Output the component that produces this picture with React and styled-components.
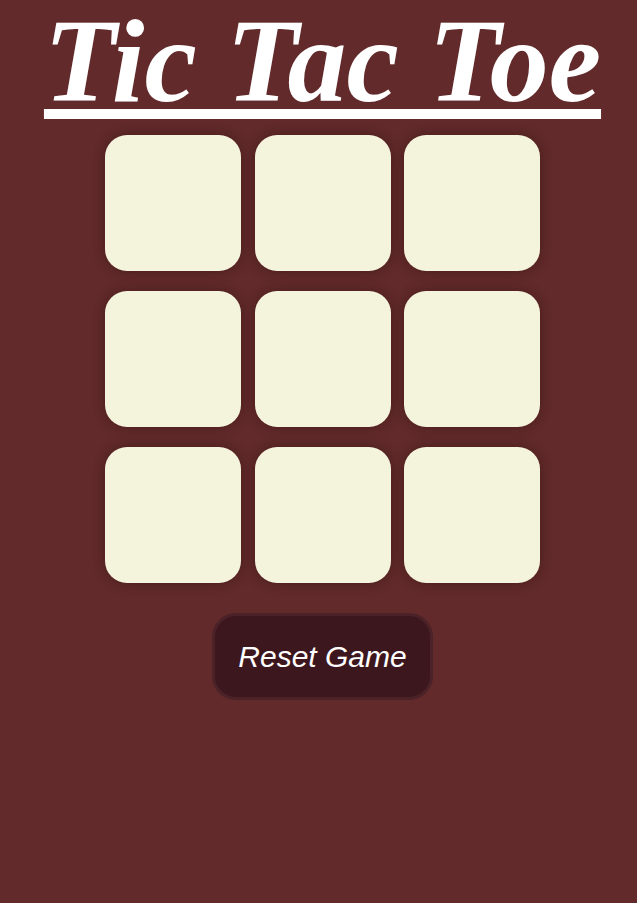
import React, { useState } from "react";
import styled, { createGlobalStyle } from "styled-components";

const GlobalStyle = createGlobalStyle`
  html, body {
    margin: 0;
    padding: 0;
    background: #622a2a;
  }
  body {
    padding-left: 8px;
  }
`;

const Page = styled.div`
  display: flex;
  flex-direction: column;
  align-items: center;
`;

const Title = styled.h1`
  margin: 0;
  font-family: "Liberation Serif", "Times New Roman", serif;
  font-style: italic;
  font-weight: bold;
  font-size: 118px;
  line-height: 124px;
  color: #ffffff;
  white-space: nowrap;
  text-decoration: underline;
  text-decoration-thickness: 10px;
  text-underline-offset: 8px;
`;

const Board = styled.div`
  display: grid;
  grid-template-columns: repeat(3, 136px);
  column-gap: 13.5px;
  row-gap: 20px;
  margin-top: 11px;
`;

const Cell = styled.button`
  width: 136px;
  height: 136px;
  border: none;
  border-radius: 22px;
  background: #f4f3dc;
  box-shadow: 0 0 12px rgba(40, 10, 12, 0.45);
  font-family: "Liberation Sans", Arial, sans-serif;
  font-size: 72px;
  font-weight: bold;
  color: #622a2a;
  cursor: pointer;
  padding: 0;
`;

const ResetButton = styled.button`
  margin-top: 30px;
  width: 221px;
  height: 87px;
  border: 3px solid #4b2227;
  border-radius: 24px;
  background: #3d171e;
  color: #ffffff;
  font-family: "Liberation Sans", Arial, sans-serif;
  font-style: italic;
  font-size: 30px;
  cursor: pointer;
`;

const App = () => {
  const [cells, setCells] = useState(Array(9).fill(""));
  const [turn, setTurn] = useState("X");

  const handleClick = (i) => {
    if (cells[i]) return;
    const next = [...cells];
    next[i] = turn;
    setCells(next);
    setTurn(turn === "X" ? "O" : "X");
  };

  const handleReset = () => {
    setCells(Array(9).fill(""));
    setTurn("X");
  };

  return (
    <Page>
      <GlobalStyle />
      <Title>Tic Tac Toe</Title>
      <Board>
        {cells.map((value, i) => (
          <Cell key={i} onClick={() => handleClick(i)}>
            {value}
          </Cell>
        ))}
      </Board>
      <ResetButton onClick={handleReset}>Reset Game</ResetButton>
    </Page>
  );
};

export default App;
